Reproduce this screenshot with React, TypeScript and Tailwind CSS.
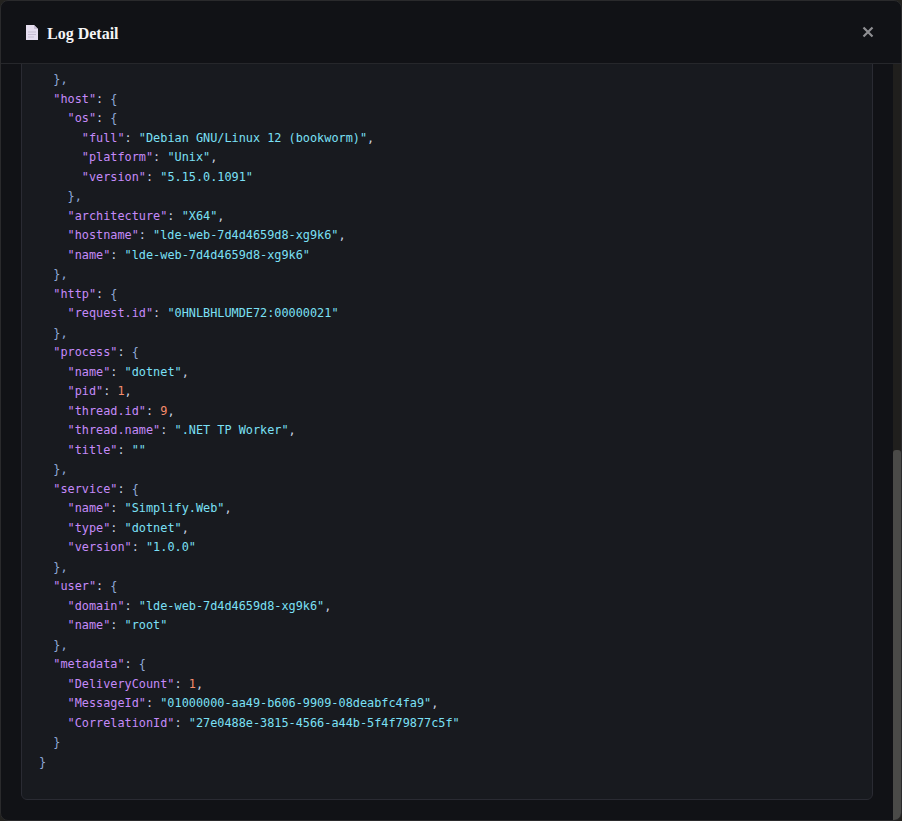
type Tok = { t: string; c: string };

const KEY = "text-[#c58af9]";
const STR = "text-[#7be0f6]";
const NUM = "text-[#f78c6c]";
const PUNC = "text-[#8fa8d8]";
const COLON = "text-[#c9d1e0]";

type Row = { i: number; k?: string; s?: string; n?: string; open?: boolean; close?: string };

const rows: Row[] = [
  { i: 1, close: "}," },
  { i: 1, k: "host", open: true },
  { i: 2, k: "os", open: true },
  { i: 3, k: "full", s: "Debian GNU/Linux 12 (bookworm)" },
  { i: 3, k: "platform", s: "Unix" },
  { i: 3, k: "version", s: "5.15.0.1091" },
  { i: 2, close: "}," },
  { i: 2, k: "architecture", s: "X64" },
  { i: 2, k: "hostname", s: "lde-web-7d4d4659d8-xg9k6" },
  { i: 2, k: "name", s: "lde-web-7d4d4659d8-xg9k6" },
  { i: 1, close: "}," },
  { i: 1, k: "http", open: true },
  { i: 2, k: "request.id", s: "0HNLBHLUMDE72:00000021" },
  { i: 1, close: "}," },
  { i: 1, k: "process", open: true },
  { i: 2, k: "name", s: "dotnet" },
  { i: 2, k: "pid", n: "1" },
  { i: 2, k: "thread.id", n: "9" },
  { i: 2, k: "thread.name", s: ".NET TP Worker" },
  { i: 2, k: "title", s: "" },
  { i: 1, close: "}," },
  { i: 1, k: "service", open: true },
  { i: 2, k: "name", s: "Simplify.Web" },
  { i: 2, k: "type", s: "dotnet" },
  { i: 2, k: "version", s: "1.0.0" },
  { i: 1, close: "}," },
  { i: 1, k: "user", open: true },
  { i: 2, k: "domain", s: "lde-web-7d4d4659d8-xg9k6" },
  { i: 2, k: "name", s: "root" },
  { i: 1, close: "}," },
  { i: 1, k: "metadata", open: true },
  { i: 2, k: "DeliveryCount", n: "1" },
  { i: 2, k: "MessageId", s: "01000000-aa49-b606-9909-08deabfc4fa9" },
  { i: 2, k: "CorrelationId", s: "27e0488e-3815-4566-a44b-5f4f79877c5f" },
  { i: 1, close: "}" },
  { i: 0, close: "}" },
];

function tokens(r: Row, next?: Row): Tok[] {
  const out: Tok[] = [{ t: "  ".repeat(r.i), c: PUNC }];
  if (r.k === undefined) {
    out.push({ t: r.close ?? "", c: PUNC });
    return out;
  }
  out.push({ t: `"${r.k}"`, c: KEY }, { t: ": ", c: COLON });
  if (r.open) {
    out.push({ t: "{", c: PUNC });
    return out;
  }
  if (r.s !== undefined) out.push({ t: `"${r.s}"`, c: STR });
  if (r.n !== undefined) out.push({ t: r.n, c: NUM });
  // last entry of an object gets no comma
  if (next?.k !== undefined) out.push({ t: ",", c: COLON });
  return out;
}

function LogIcon() {
  return (
    <svg width="14" height="17" viewBox="0 0 14 17" className="shrink-0">
      <path d="M1 1h8l4 4v11H1z" fill="#e6def0" />
      <path d="M9 1l4 4H9z" fill="#c9bfd6" />
      <path d="M3 8h8M3 10.5h8M3 13h6" stroke="#c6bdd2" strokeWidth="1.2" />
    </svg>
  );
}

export default function App() {
  return (
    <div className="h-[821px] w-[902px] overflow-hidden bg-[#23221f]">
      <div className="flex h-full w-[902px] flex-col overflow-hidden rounded-[8px] border border-[#2a2a2c] bg-[#111216]">
        <header className="flex h-[63px] shrink-0 items-center justify-between border-b border-[#26272b] pl-[24px] pr-[27px]">
          <div className="flex items-center gap-2">
            <LogIcon />
            <h2 className="pt-[3px] font-['Liberation_Serif',serif] text-[16px] font-bold text-[#f4f4f5]">Log Detail</h2>
          </div>
          <button className="text-[#8f8f92]" aria-label="Close">
            <svg width="12" height="12" viewBox="0 0 12 12">
              <path d="M1.5 1.5l9 9M10.5 1.5l-9 9" stroke="currentColor" strokeWidth="2.2" />
            </svg>
          </button>
        </header>
        <div className="relative flex min-h-0 flex-1 flex-col justify-end overflow-hidden pb-[20px] pl-[20px] pr-[28px]">
          <pre className="w-[852px] shrink-0 rounded-[6px] border border-[#2a2b33] bg-[#181a1f] pb-[27px] pl-[17px] pt-[40px] font-['DejaVu_Sans_Mono','Liberation_Mono',monospace] text-[11.85px] leading-[19.5px]">
            {rows.map((r, idx) => (
              <div key={idx} className="h-[19.5px] whitespace-pre">
                {tokens(r, rows[idx + 1]).map((tok, j) => (
                  <span key={j} className={tok.c}>
                    {tok.t}
                  </span>
                ))}
              </div>
            ))}
          </pre>
          <div className="absolute bottom-0 right-0 top-0 w-[8px] bg-[#201f1d]">
            <div className="absolute bottom-0 h-[370px] w-full rounded-t-[3px] bg-[#4a4a48]" />
          </div>
        </div>
      </div>
    </div>
  );
}
